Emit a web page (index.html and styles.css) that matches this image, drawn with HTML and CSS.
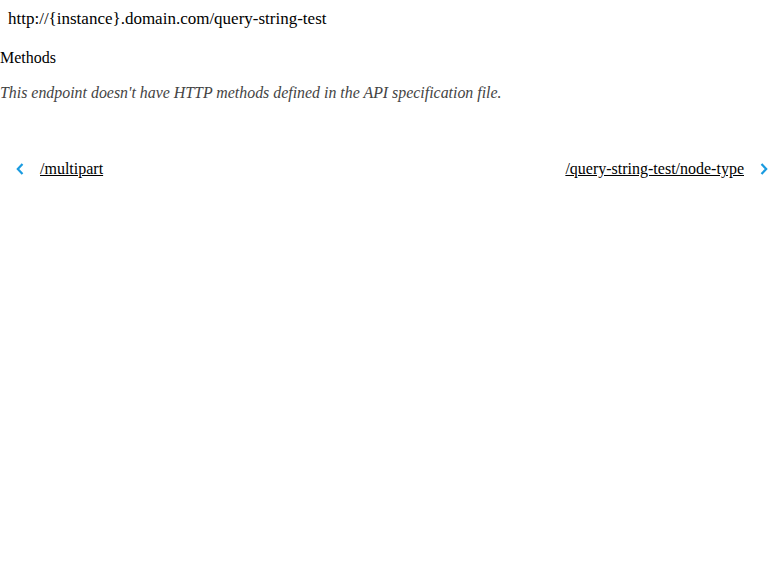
FILE: index.html
```html
<!DOCTYPE html>
<html>
<head>
<meta charset="utf-8">
<link rel="stylesheet" href="styles.css">
</head>
<body>
<div class="page">
  <div class="url">http://{instance}.domain.com/query-string-test</div>
  <div class="methods-title">Methods</div>
  <p class="empty">This endpoint doesn't have HTTP methods defined in the API specification file.</p>
  <nav class="pager">
    <a class="prev" href="#"><svg class="chev" width="8" height="12" viewBox="0 0 8 12"><path d="M6.5 1 L1.8 6 L6.5 11" fill="none" stroke="#1a9be0" stroke-width="2.2"/></svg><span>/multipart</span></a>
    <a class="next" href="#"><span>/query-string-test/node-type</span><svg class="chev" width="8" height="12" viewBox="0 0 8 12"><path d="M1.5 1 L6.2 6 L1.5 11" fill="none" stroke="#1a9be0" stroke-width="2.2"/></svg></a>
  </nav>
</div>
</body>
</html>
```
FILE: styles.css
```css
html, body { margin: 0; padding: 0; background: #fff; }
.page { font-family: "Liberation Serif", "Times New Roman", serif; font-size: 16px; color: #000; }
.url { padding: 8px 8px 0 8px; line-height: 21px; font-size: 17px; }
.methods-title { margin-top: 19px; line-height: 20px; }
.empty { margin: 15px 0 0 0; font-family: "Liberation Serif", "Times New Roman", serif; font-style: italic; font-size: 15.9px; color: #444; line-height: 20px; }
.pager { display: flex; justify-content: space-between; align-items: center; margin-top: 57px; padding: 0 16px; }
.pager a { color: #000; display: flex; align-items: center; gap: 16px; text-decoration: none; }
.pager a span { text-decoration: underline; }
```
